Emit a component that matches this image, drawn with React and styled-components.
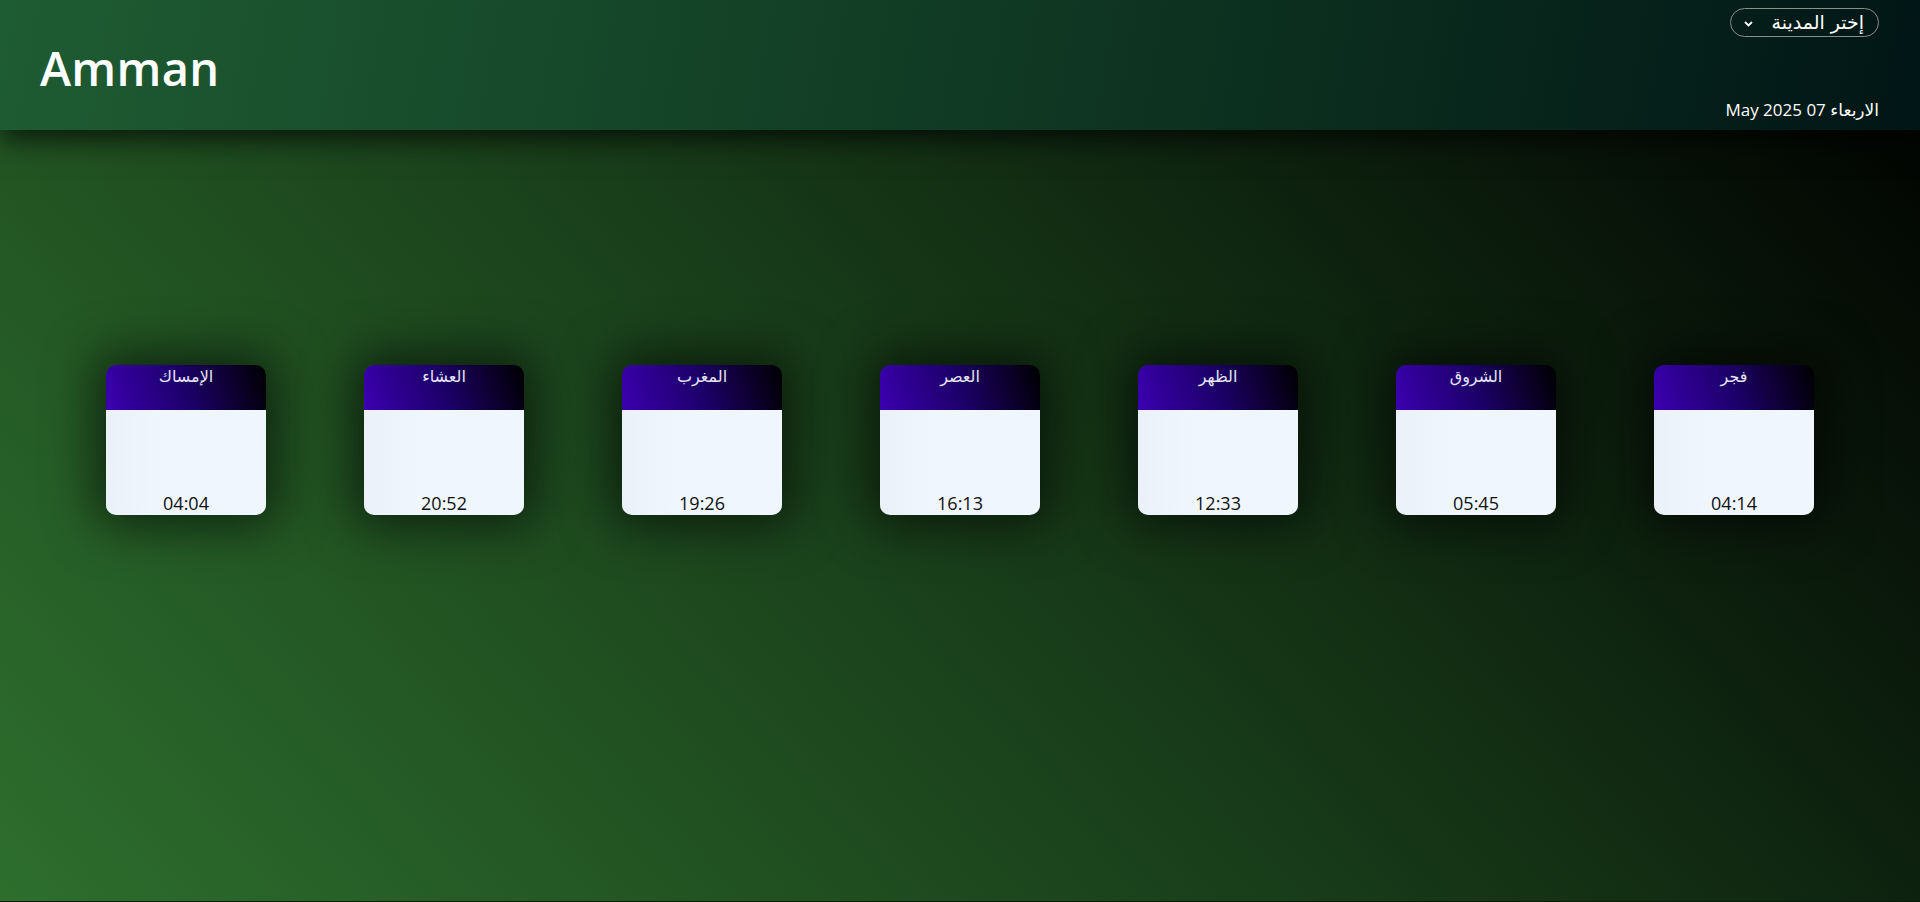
import React from "react";
import styled, { createGlobalStyle } from "styled-components";

const GlobalStyle = createGlobalStyle`
  html, body {
    margin: 0;
    padding: 0;
  }
  body {
    font-family: "Open Sans", "DejaVu Sans", sans-serif;
    background: #000;
  }
`;

const prayers = [
  { name: "الإمساك", time: "04:04" },
  { name: "العشاء", time: "20:52" },
  { name: "المغرب", time: "19:26" },
  { name: "العصر", time: "16:13" },
  { name: "الظهر", time: "12:33" },
  { name: "الشروق", time: "05:45" },
  { name: "فجر", time: "04:14" },
];

const App = () => {
  return (
    <>
      <GlobalStyle />
      <StPage>
        <StHeader>
          <StCity>Amman</StCity>
          <StSide>
            <StSelect type="button" dir="rtl">
              <span>إختر المدينة</span>
              <svg width="9" height="6" viewBox="0 0 9 6">
                <path d="M1 1l3.5 3.5L8 1" fill="none" stroke="#fff" strokeWidth="1.8" />
              </svg>
            </StSelect>
            <StDate dir="rtl">الاربعاء 07 May 2025</StDate>
          </StSide>
        </StHeader>
        <StCards>
          {prayers.map((p) => (
            <StCard key={p.name}>
              <StCardHead>{p.name}</StCardHead>
              <StCardBody>{p.time}</StCardBody>
            </StCard>
          ))}
        </StCards>
      </StPage>
    </>
  );
};

export default App;

const StPage = styled.div`
  height: 901px;
  border-bottom: 1px solid #0c1a0c;
  background: linear-gradient(48deg, #2d6e2d 0%, #173a18 50%, #000 100%);
  overflow: hidden;
`;

const StHeader = styled.header`
  height: 130px;
  box-sizing: border-box;
  display: flex;
  justify-content: space-between;
  align-items: stretch;
  padding: 0 41px 0 40px;
  background: linear-gradient(100deg, #1e5c33 0%, #0f3722 55%, #011616 100%);
  box-shadow: 0 8px 28px rgba(0, 0, 0, 0.75);
  position: relative;
`;

const StCity = styled.h1`
  margin: 0;
  padding-top: 36px;
  font-family: "Open Sans", sans-serif;
  font-size: 47px;
  font-weight: 600;
  color: #fff;
  letter-spacing: 0.3px;
`;

const StSide = styled.div`
  display: flex;
  flex-direction: column;
  justify-content: space-between;
  align-items: flex-end;
  padding: 8px 0 9px;
`;

const StSelect = styled.button`
  width: 149px;
  height: 29px;
  display: flex;
  align-items: center;
  gap: 18px;
  padding: 0 14px 0 10px;
  box-sizing: border-box;
  border: 1px solid #8a8f8c;
  border-radius: 15px;
  background: transparent;
  color: #fff;
  font-family: "DejaVu Sans", "Liberation Sans", sans-serif;
  font-size: 19px;
  line-height: 1;
  cursor: pointer;
  svg {
    margin-top: 2px;
  }
`;

const StDate = styled.div`
  font-family: "Open Sans", "DejaVu Sans", sans-serif;
  font-size: 17px;
  color: #fff;
`;

const StCards = styled.main`
  display: flex;
  justify-content: space-evenly;
  padding: 235px 8px 0;
`;

const StCard = styled.div`
  width: 160px;
  height: 150px;
  border-radius: 10px;
  overflow: hidden;
  display: flex;
  flex-direction: column;
  box-shadow: 0 0 50px 10px rgba(0, 0, 0, 0.6);
`;

const StCardHead = styled.div`
  height: 45px;
  text-align: center;
  padding-top: 2px;
  box-sizing: border-box;
  background: linear-gradient(72deg, #3c00b0 0%, #1c0068 50%, #000 100%);
  color: #e6e4f4;
  font-family: "DejaVu Sans", "Liberation Sans", sans-serif;
  font-size: 16px;
`;

const StCardBody = styled.div`
  flex: 1;
  display: flex;
  align-items: flex-end;
  justify-content: center;
  background: linear-gradient(to right, #ebf1f9 0%, #f0f6fe 35%, #f0f6fe 100%);
  color: #111;
  font-family: "Open Sans", sans-serif;
  font-size: 18px;
  line-height: 22px;
  padding-bottom: 1px;
`;
